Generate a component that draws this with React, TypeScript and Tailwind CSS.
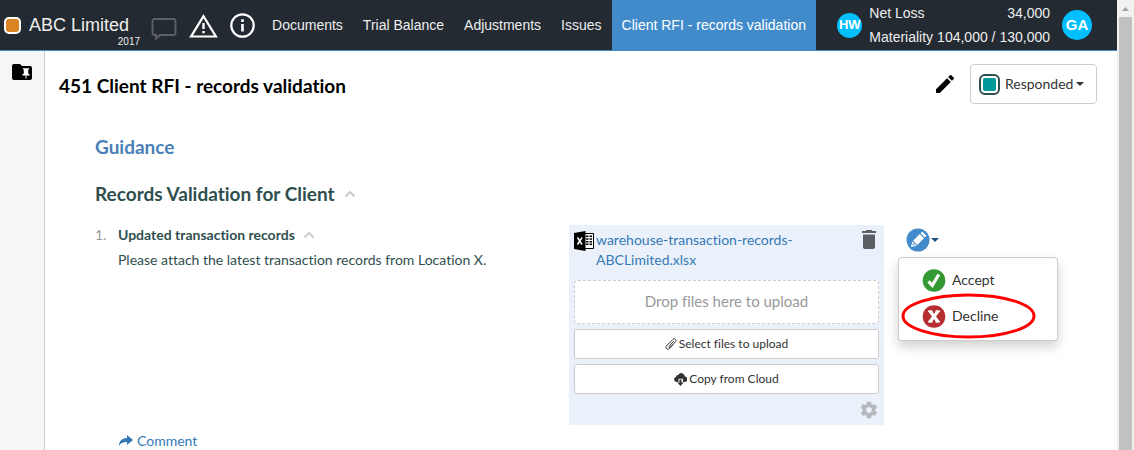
import React from "react";

const navItems = ["Documents", "Trial Balance", "Adjustments", "Issues"];

function Chevron() {
  return (
    <svg className="h-[8px] w-[12px] shrink-0" viewBox="0 0 12 8" aria-hidden="true">
      <path d="M1.5 6.5 6 2l4.500 4.500" fill="none" stroke="#ccc" strokeWidth="2" />
    </svg>
  );
}

function Caret() {
  return (
    <svg className="h-[4px] w-[8px] shrink-0" viewBox="0 0 8 4" aria-hidden="true">
      <path d="M0 0h8L4 4z" fill="currentColor" />
    </svg>
  );
}

function Header() {
  return (
    <header className="flex h-[51px] items-stretch border-b border-[#428bca] bg-[#232a31] font-['Liberation_Sans',sans-serif] text-sm text-[#eee]">
      <div className="flex flex-1 items-center">
        <a href="#home" className="flex h-full shrink-0 items-center pl-1">
          <span className="size-[17px] rounded-[5px] border-2 border-white bg-[#d98324]" />
          <span className="relative ml-2 text-lg">
            ABC Limited
            <span className="absolute top-[23px] -right-[11px] text-[10px] leading-4">2017</span>
          </span>
        </a>
        <button type="button" aria-label="Messages" className="ml-[22px] shrink-0 pt-[7px]">
          <svg className="h-[24px] w-[26px]" viewBox="0 0 26 24" aria-hidden="true">
            <path
              d="M3.500 2h19a2 2 0 0 1 2 2v12a2 2 0 0 1-2 2H9l-4 3.700V18H3.500a2 2 0 0 1-2-2V4a2 2 0 0 1 2-2z"
              fill="none"
              stroke="#5d6166"
              strokeWidth="1.800"
            />
          </svg>
        </button>
        <button type="button" aria-label="Warnings" className="ml-3 shrink-0">
          <svg className="h-[25px] w-[29px]" viewBox="0 0 29 25" aria-hidden="true">
            <path d="M14.500 3.200 26.900 23.500H2.100z" fill="none" stroke="#fff" strokeWidth="2.200" />
            <path d="M13.300 10h2.400v6h-2.400zM13.300 18h2.400v2.200h-2.400z" fill="#fff" />
          </svg>
        </button>
        <button type="button" aria-label="Information" className="ml-3 shrink-0">
          <svg className="size-[25px]" viewBox="0 0 25 25" aria-hidden="true">
            <circle cx="12.500" cy="12.500" r="11.200" fill="none" stroke="#fff" strokeWidth="2.200" />
            <path d="M11.200 6.300h2.600v2.600h-2.600zM11.200 11h2.600v7.500h-2.600z" fill="#fff" />
          </svg>
        </button>
        <nav className="ml-[7px] flex h-[51px] shrink-0">
          {navItems.map((item) => (
            <a key={item} href="#section" className="flex items-center px-[10px] whitespace-nowrap">
              {item}
            </a>
          ))}
          <a
            href="#rfi"
            aria-current="page"
            className="flex items-center bg-[#428bca] px-[10px] whitespace-nowrap text-white"
          >
            Client RFI - records validation
          </a>
        </nav>
      </div>
      <div className="flex shrink-0 items-center pr-[25px]">
        <span className="flex size-[25px] items-center justify-center rounded-full bg-[#00bfff] text-[13px] font-bold text-white">
          HW
        </span>
        <dl className="ml-[7px] leading-6">
          <div className="flex justify-between gap-1">
            <dt>Net Loss</dt>
            <dd>34,000</dd>
          </div>
          <div className="flex justify-between gap-1">
            <dt>Materiality</dt>
            <dd>104,000 / 130,000</dd>
          </div>
        </dl>
        <button
          type="button"
          className="ml-3 flex size-[30px] items-center justify-center rounded-full bg-[#00bfff] text-[15px] font-bold text-white"
        >
          GA
        </button>
      </div>
    </header>
  );
}

function Sidebar() {
  return (
    <aside className="w-[45px] shrink-0 border-r border-[#ccc] bg-[#f6f6f6]">
      <button type="button" aria-label="Pinned folder" className="mt-[13px] ml-[12px] block">
        <svg className="h-[16px] w-[20px]" viewBox="0 0 20 16" aria-hidden="true">
          <path d="M2 0h6l2 2h8a2 2 0 0 1 2 2v10a2 2 0 0 1-2 2H2a2 2 0 0 1-2-2V2a2 2 0 0 1 2-2z" fill="#000" />
          <path d="M10.900 4.300h6.200v1.300h-.9v3.600l1.500 1.500v.9h-3.200V14.500h-1v-2.900h-3.200v-.9l1.500-1.500V5.600h-.9z" fill="#fff" />
        </svg>
      </button>
    </aside>
  );
}

function FilePanel() {
  return (
    <div className="h-[200px] w-[315px] shrink-0 bg-[#ebf1fa] p-[5px] text-[#333]">
      <div className="flex h-[50px] items-start">
        <svg className="mt-px h-[20px] w-[20px] shrink-0" viewBox="0 0 20 20" aria-hidden="true">
          <path d="M11 2.500h8.500v15H11" fill="#fff" stroke="#000" />
          <path
            d="M12 4.500h2.500v1.500H12zM15.500 4.500H18v1.500h-2.500zM12 7.200h2.500v1.500H12zM15.500 7.200H18v1.500h-2.500zM12 9.900h2.500v1.500H12zM15.500 9.900H18v1.500h-2.500zM12 12.600h2.500v1.500H12zM15.500 12.600H18v1.500h-2.500z"
            fill="#000"
          />
          <path d="M0 2 11.500 0v20L0 18z" fill="#000" />
          <path d="m3.500 6.500 4.500 7M8 6.500l-4.500 7" stroke="#fff" strokeWidth="1.500" />
        </svg>
        <a href="#file" className="ml-[2px] flex-1 text-sm leading-5 text-[#337ab7]">
          warehouse-transaction-records-
          <br />
          ABCLimited.xlsx
        </a>
        <button type="button" aria-label="Delete file" className="mr-[3px]">
          <svg className="h-[19px] w-[14px]" viewBox="0 0 14 19" aria-hidden="true">
            <path d="M4.500 0h5l1 1H14v2H0V1h3.500zM1 4.500h12V17a2 2 0 0 1-2 2H3a2 2 0 0 1-2-2z" fill="#5b5f63" />
          </svg>
        </button>
      </div>
      <div className="flex h-[44px] items-center justify-center rounded border border-dashed border-[#ccc] bg-white text-[15px] text-[#999]">
        Drop files here to upload
      </div>
      <button
        type="button"
        className="mt-[5px] flex h-[30px] w-full items-center justify-center gap-[2px] rounded-[3px] border border-[#ccc] bg-white text-xs"
      >
        <svg className="size-[12px]" viewBox="0 0 12 12" fill="none" stroke="#333" aria-hidden="true">
          <path d="M8.600 3.300 4.300 8c-.9 1 .3 2.100 1.200 1.200l5-5.500c1.500-1.800-.9-3.900-2.500-2.300L1.500 7.900c-1.800 2.200 1 4.600 3 2.500l3.500-3.800" />
        </svg>
        Select files to upload
      </button>
      <button
        type="button"
        className="mt-[5px] flex h-[30px] w-full items-center justify-center gap-[2px] rounded-[3px] border border-[#ccc] bg-white text-xs"
      >
        <svg className="size-[13px]" viewBox="0 0 13 13" aria-hidden="true">
          <path
            d="M2.800 9A2.600 2.600 0 0 1 2 3.900 2 2 0 0 1 4.200 2 3.500 3.500 0 0 1 10.800 3.600 2.700 2.700 0 0 1 10.500 9H9V5.700H4.500V9z"
            fill="#333"
          />
          <path d="M5.500 6.500h2v3h2.300L6.500 13 3.200 9.500h2.300z" fill="#333" />
        </svg>
        Copy from Cloud
      </button>
      <div className="flex justify-end">
        <button type="button" aria-label="Settings" className="mt-[6px]">
          <svg className="size-[20px]" viewBox="0 0 24 24" aria-hidden="true">
            <path
              d="M19.430 12.980c.04-.32.07-.64.07-.98s-.03-.66-.07-.98l2.110-1.650c.19-.15.24-.42.12-.64l-2-3.460c-.12-.22-.39-.3-.61-.22l-2.490 1c-.52-.4-1.080-.73-1.690-.98l-.38-2.650C14.460 2.180 14.250 2 14 2h-4c-.25 0-.46.18-.49.42l-.38 2.650c-.61.25-1.170.59-1.690.98l-2.490-1c-.23-.09-.49 0-.61.22l-2 3.460c-.13.22-.07.49.12.64l2.110 1.650c-.04.32-.07.65-.07.98s.03.66.07.98l-2.110 1.650c-.19.15-.24.42-.12.64l2 3.460c.12.22.39.3.61.22l2.490-1c.52.4 1.080.73 1.690.98l.38 2.650c.03.24.24.42.49.42h4c.25 0 .46-.18.49-.42l.38-2.650c.61-.25 1.170-.59 1.690-.98l2.490 1c.23.09.49 0 .61-.22l2-3.460c.12-.22.07-.49-.12-.64l-2.110-1.650zM12 15.500c-1.930 0-3.500-1.570-3.500-3.500s1.570-3.500 3.500-3.500 3.500 1.570 3.500 3.500-1.570 3.500-3.500 3.500z"
              fill="#b5b9bd"
            />
          </svg>
        </button>
      </div>
    </div>
  );
}

function ReviewMenu() {
  return (
    <div className="relative mt-[3px] ml-[22px] w-[211px] shrink-0">
      <button type="button" aria-label="Review response" aria-expanded="true" className="flex items-center gap-px text-[#1f5480]">
        <svg className="size-[24px]" viewBox="0 0 24 24" aria-hidden="true">
          <circle cx="12" cy="12" r="11.500" fill="#428bca" />
          <g transform="rotate(45 12 12)" fill="#fff">
            <path d="M9 3h6v2.300H9zM9 6.500h6v9.500H9z" />
            <path d="M9 17h6l-3 5zM10.500 17.900h3L12 19.500z" fillRule="evenodd" />
          </g>
        </svg>
        <Caret />
      </button>
      <ul className="absolute top-[29px] -left-[8px] w-[160px] rounded border border-black/20 bg-white pt-1 pb-[6px] text-sm text-[#333] shadow-[0_6px_12px_rgba(0,0,0,0.18)]">
        <li>
          <button type="button" className="flex h-[36px] w-full items-center gap-[6px] pl-[23px]">
            <svg className="size-[24px]" viewBox="0 0 24 24" aria-hidden="true">
              <circle cx="12" cy="12.500" r="11.300" fill="#339933" />
              <path d="m6.500 13.300 3.800 4L16.800 6.500" fill="none" stroke="#fff" strokeWidth="3.200" />
            </svg>
            Accept
          </button>
        </li>
        <li>
          <button type="button" className="flex h-[36px] w-full items-center gap-[6px] pl-[23px]">
            <svg className="size-[24px]" viewBox="0 0 24 24" aria-hidden="true">
              <circle cx="12" cy="12.500" r="11.300" fill="#b52e31" />
              <path d="m7.800 7 8.400 11M16.200 7l-8.400 11" stroke="#fff" strokeWidth="3.200" />
              <path d="M6 6.500h4.500V8H6zM13.500 6.500H18V8h-4.500zM6 17h4.500v1.500H6zM13.500 17H18v1.500h-4.500z" fill="#fff" />
            </svg>
            Decline
          </button>
        </li>
      </ul>
      <svg className="pointer-events-none absolute top-[65px] -left-[6px] h-[46px] w-[138px]" viewBox="0 0 138 46" aria-hidden="true">
        <ellipse cx="68.500" cy="23" rx="65.500" ry="21" fill="none" stroke="#f00" strokeWidth="3" />
      </svg>
    </div>
  );
}

function Content() {
  return (
    <main className="min-w-0 flex-1 bg-white">
      <div className="flex items-center pt-[13px] pr-5 pl-[14px]">
        <h1 className="flex-1 pt-1 text-[19px] leading-7 font-bold text-black [font-variant-ligatures:none]">
          451 Client RFI - records validation
        </h1>
        <button type="button" aria-label="Edit" className="mr-[13px]">
          <svg className="size-[24px]" viewBox="0 0 24 24" aria-hidden="true">
            <path
              d="M3 17.250V21h3.750L17.810 9.940l-3.750-3.750L3 17.250zM20.710 7.040a1 1 0 0 0 0-1.410l-2.340-2.340a1 1 0 0 0-1.410 0l-1.830 1.830 3.750 3.750 1.830-1.830z"
              fill="#000"
            />
          </svg>
        </button>
        <button
          type="button"
          className="flex h-[40px] w-[127px] items-center rounded border border-[#ccc] pl-2 text-sm text-[#333]"
        >
          <span className="mr-[5px] flex size-[21px] items-center justify-center rounded-[6px] border-2 border-[#2f4f4f]">
            <span className="size-[13px] rounded-[2px] bg-[#009999]" />
          </span>
          <span className="mr-[3px]">Responded</span>
          <Caret />
        </button>
      </div>
      <div className="pl-[50px] text-[#2f4f4f] [font-variant-ligatures:none]">
        <h2 className="mt-[30px] text-[19px] leading-[26px] font-bold text-[#4a80b8]">Guidance</h2>
        <h2 className="mt-[21px] flex items-center gap-[9px] text-[19px] leading-[26px] font-bold">
          Records Validation for Client
          <Chevron />
        </h2>
        <div className="mt-[18px] flex text-sm">
          <span className="w-[23px] shrink-0 leading-5 text-[#999]">1.</span>
          <div className="min-w-0 flex-1">
            <h3 className="flex items-center gap-2 leading-5 font-bold">
              Updated transaction records
              <Chevron />
            </h3>
            <p className="mt-[5px] leading-5">Please attach the latest transaction records from Location X.</p>
          </div>
          <FilePanel />
          <ReviewMenu />
        </div>
        <a href="#comment" className="mt-[6px] ml-6 flex w-fit items-center gap-1 text-sm leading-5 text-[#337ab7]">
          <svg className="h-[12px] w-[14px]" viewBox="0 0 14 12" aria-hidden="true">
            <path d="M8 0l6 5-6 5V7C4 7 1.500 8 0 11 0 6 3 3 8 3z" fill="currentColor" />
          </svg>
          Comment
        </a>
      </div>
    </main>
  );
}

export default function App() {
  return (
    <div className="flex h-screen overflow-hidden bg-white font-['Lato',sans-serif]">
      <div className="flex min-w-0 flex-1 flex-col">
        <Header />
        <div className="flex min-h-0 flex-1">
          <Sidebar />
          <Content />
        </div>
      </div>
      <div className="flex w-[17px] shrink-0 flex-col items-center bg-[#f1f1f1]" aria-hidden="true">
        <div className="flex h-[17px] items-center">
          <svg className="h-[4px] w-[7px]" viewBox="0 0 7 4">
            <path d="M0 4h7L3.500 0z" fill="#a3a3a3" />
          </svg>
        </div>
        <div className="w-[13px] flex-1 bg-[#c1c1c1]" />
      </div>
    </div>
  );
}
